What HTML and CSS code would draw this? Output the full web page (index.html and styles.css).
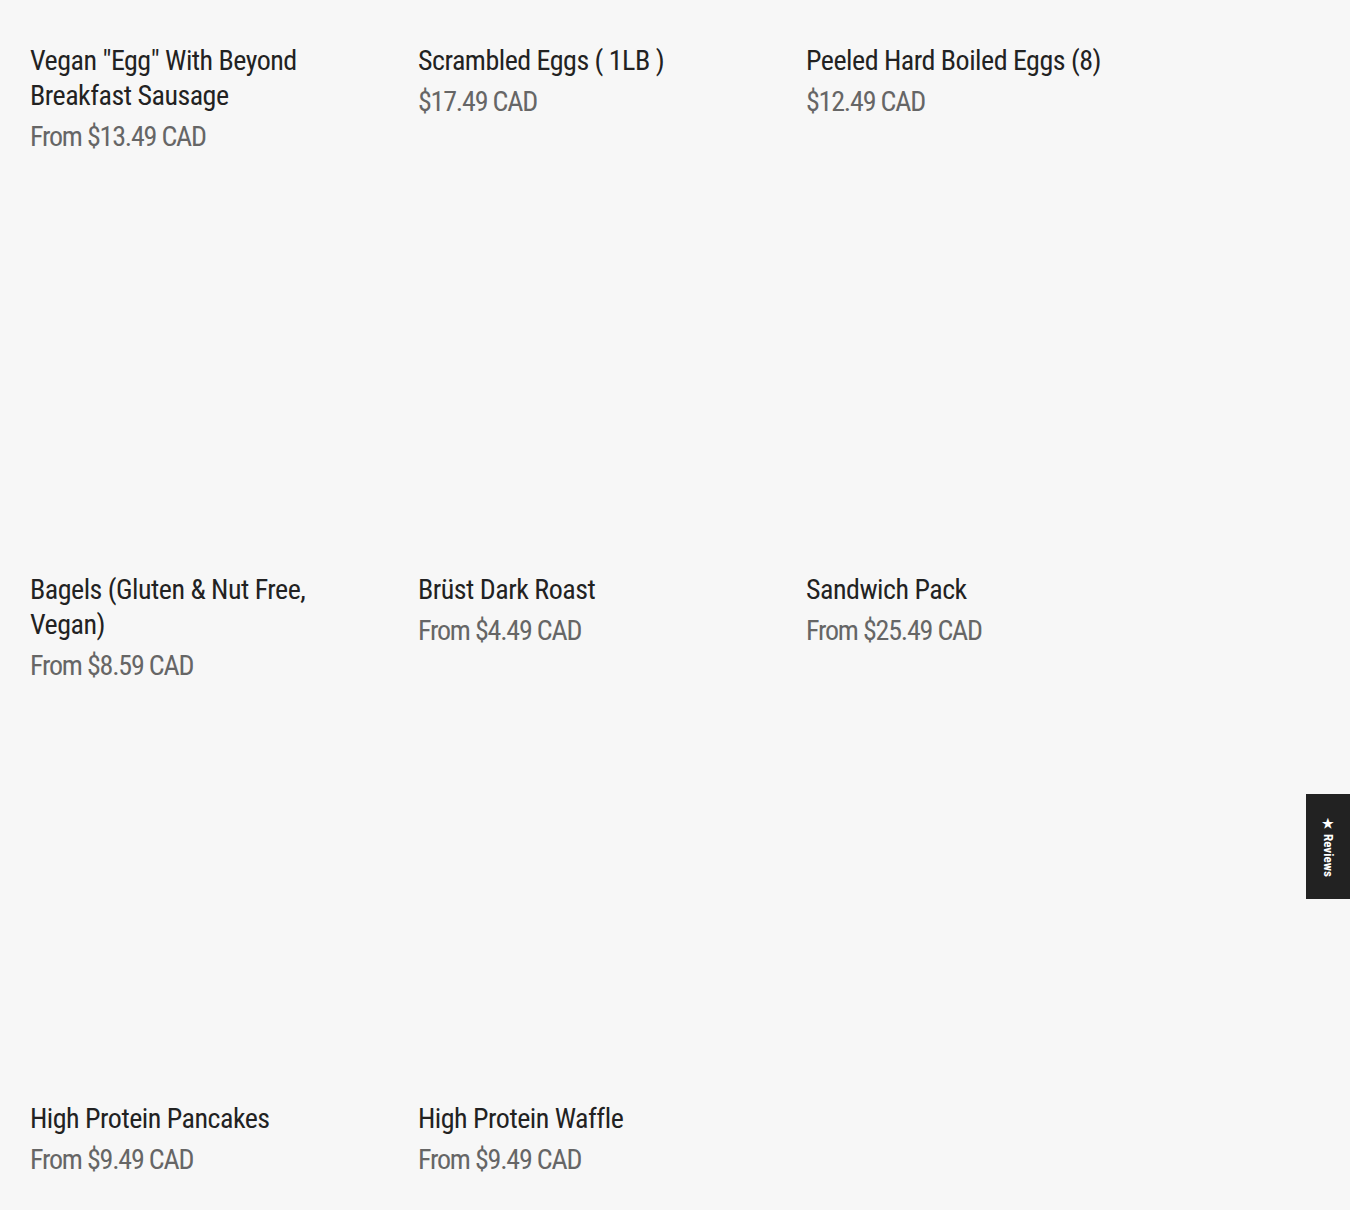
FILE: index.html
```html
<!DOCTYPE html>
<html lang="en">
<head>
	<meta charset="UTF-8">
	<meta name="viewport" content="width=device-width, initial-scale=1.0">
	<title>Breakfast - Collection</title>
	<link rel="stylesheet" href="styles.css">
</head>
<body>
<main class="collection">
	<ul class="product-grid">
		<li class="card">
			<div class="card-media"></div>
			<h3 class="card-title">Vegan "Egg" With Beyond Breakfast Sausage</h3>
			<div class="card-price">From $13.49 CAD</div>
		</li>
		<li class="card">
			<div class="card-media"></div>
			<h3 class="card-title">Scrambled Eggs ( 1LB )</h3>
			<div class="card-price">$17.49 CAD</div>
		</li>
		<li class="card">
			<div class="card-media"></div>
			<h3 class="card-title">Peeled Hard Boiled Eggs (8)</h3>
			<div class="card-price">$12.49 CAD</div>
		</li>
		<li class="card">
			<div class="card-media"></div>
			<h3 class="card-title">Bagels (Gluten &amp; Nut Free, Vegan)</h3>
			<div class="card-price">From $8.59 CAD</div>
		</li>
		<li class="card">
			<div class="card-media"></div>
			<h3 class="card-title">Brüst Dark Roast</h3>
			<div class="card-price">From $4.49 CAD</div>
		</li>
		<li class="card">
			<div class="card-media"></div>
			<h3 class="card-title">Sandwich Pack</h3>
			<div class="card-price">From $25.49 CAD</div>
		</li>
		<li class="card">
			<div class="card-media"></div>
			<h3 class="card-title">High Protein Pancakes</h3>
			<div class="card-price">From $9.49 CAD</div>
		</li>
		<li class="card">
			<div class="card-media"></div>
			<h3 class="card-title">High Protein Waffle</h3>
			<div class="card-price">From $9.49 CAD</div>
		</li>
	</ul>
</main>

<!-- floating reviews tab -->
<button class="reviews-tab" type="button"><span>★ Reviews</span></button>
</body>
</html>
```

FILE: styles.css
```css
body {
	margin: 0;
	background: #f7f7f7;
	font-family: Roboto, "DejaVu Sans Condensed", sans-serif;
	font-stretch: 75%;
	color: #222;
	overflow: hidden;
}

/* page is scrolled past the first row of images */
.collection {
	padding: 0 30px;
	margin-top: -330px;
}

.product-grid {
	list-style: none;
	margin: 0;
	padding: 0;
	display: grid;
	grid-template-columns: repeat(3, 358px);
	column-gap: 30px;
	row-gap: 45px;
}

.card-media {
	aspect-ratio: 1 / 1;
	background: #f7f7f7;
	margin-bottom: 15px;
}

.card-title {
	margin: 0;
	padding-right: 20px;
	font-size: 28px;
	font-weight: normal;
	letter-spacing: -0.5px;
	line-height: 35px;
	color: #222;
}

.card-price {
	margin-top: 6px;
	font-size: 28px;
	letter-spacing: -1.2px;
	line-height: 35px;
	color: #666;
}

/* REVIEWS TAB */
.reviews-tab {
	position: fixed;
	right: 0;
	top: 794px;
	width: 44px;
	height: 105px;
	padding: 0;
	border: 0;
	background: #222;
	color: #fff;
	display: flex;
	align-items: center;
	justify-content: center;
}

.reviews-tab span {
	writing-mode: vertical-rl;
	font-family: Roboto, sans-serif;
	font-stretch: 75%;
	font-size: 13px;
	font-weight: bold;
	white-space: nowrap;
}
```
